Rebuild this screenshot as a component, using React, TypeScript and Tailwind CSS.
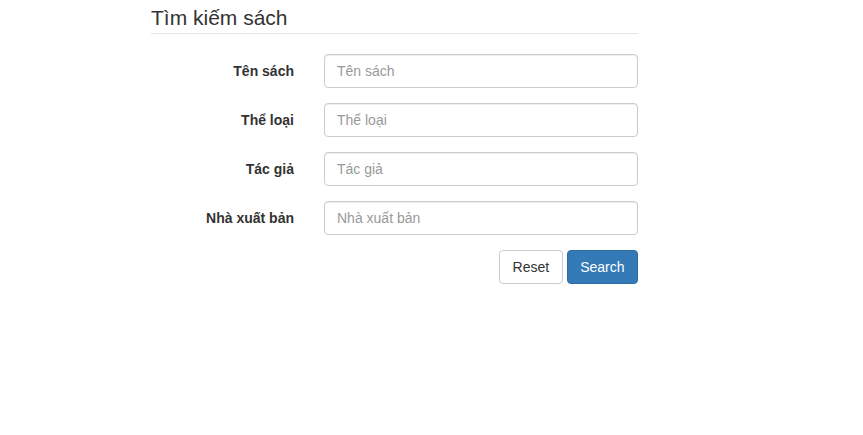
import React from "react";

const fields = ["Tên sách", "Thể loại", "Tác giả", "Nhà xuất bản"];

export default function App() {
  return (
    <div
      className="min-h-[435px] bg-white text-[14px] leading-[20px] text-[#333]"
      style={{ fontFamily: '"Liberation Sans", Arial, Helvetica, sans-serif' }}
    >
      <div className="ml-[151px] w-[487px] pt-[3px]">
        <div className="border-b border-[#e5e5e5] text-[21px] leading-[30px] text-[#333] mb-[20px]">
          Tìm kiếm sách
        </div>
        <div className="flex flex-col gap-[15px]">
          {fields.map((f) => (
            <div key={f} className="flex items-start">
              <label className="w-[143px] text-right font-bold pt-[7px] leading-[20px]">{f}</label>
              <input
                placeholder={f}
                className="ml-[30px] w-[314px] h-[34px] rounded-[4px] border border-[#ccc] px-[12px] py-[6px] text-[14px] text-[#555] placeholder:text-[#999] outline-none shadow-[inset_0_1px_1px_rgba(0,0,0,0.075)]"
              />
            </div>
          ))}
          <div className="flex justify-end gap-[4px]">
            <button className="h-[34px] px-[12.5px] rounded-[4px] border border-[#ccc] bg-white text-[#333] text-[14px]">
              Reset
            </button>
            <button className="h-[34px] px-[12.5px] rounded-[4px] border border-[#2e6da4] bg-[#337ab7] text-white text-[14px]">
              Search
            </button>
          </div>
        </div>
      </div>
    </div>
  );
}
